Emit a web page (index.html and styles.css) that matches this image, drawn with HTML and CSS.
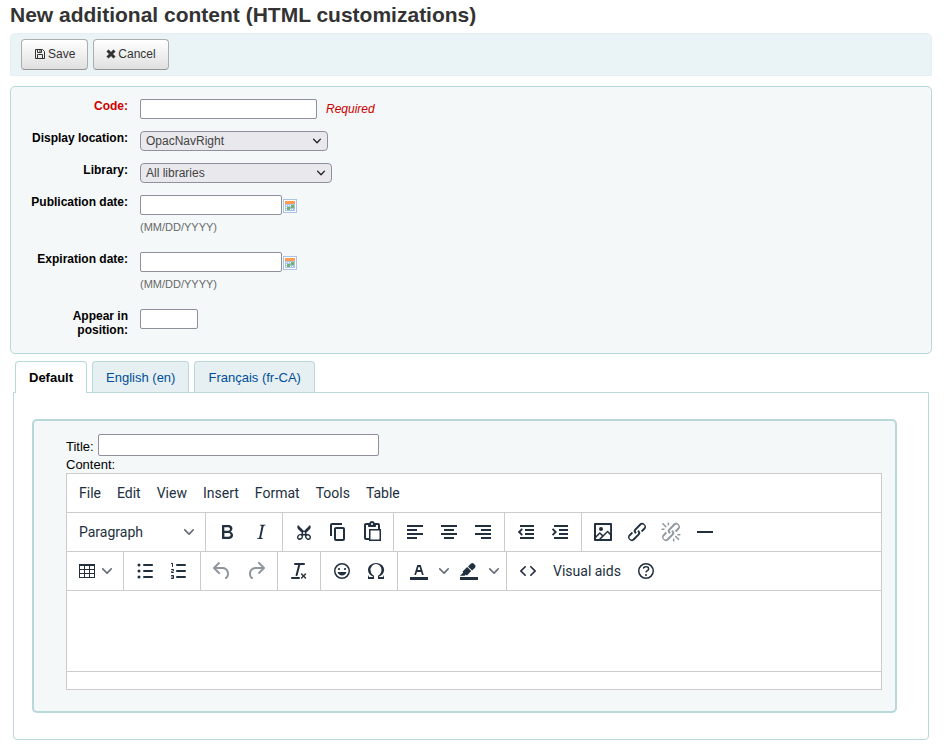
FILE: index.html
```html
<!DOCTYPE html>
<html lang="en">
<head>
<meta charset="utf-8">
<title>New additional content</title>
<link rel="stylesheet" href="styles.css">
</head>
<body>
<svg class="defs" aria-hidden="true">
  <symbol id="chev" viewBox="0 0 10 10"><path d="M8.7 2.2c.3-.3.8-.3 1 0 .4.4.4.9 0 1.2L5.7 7.8c-.3.3-.9.3-1.2 0L.2 3.4a.8.8 0 0 1 0-1.2c.3-.3.8-.3 1.1 0L5 6l3.7-3.8z"/></symbol>
  <symbol id="cal" viewBox="0 0 14 14"><path fill="#a9c4e8" d="M0 0h14v14H0z"/><path fill="#fff" d="M1 1h12v12H1z"/><path fill="#a9c4e8" d="M2 5h10v7H2z"/><path fill="#ff9b52" d="M2 2h10v3H2z"/><path fill="#fff" d="M3 6h1v1H3zm2 0h1v1H5zm2 0h1v1H7zm2 0h1v1H9zM3 8h1v1H3zm2 0h1v1H5zM3 10h1v1H3zm4 0h1v1H7zm2 0h1v1H9z"/><path fill="#6cb56c" d="M8 6h3v3H8zM4 8h3v3H4z"/></symbol>
</svg>
<main>
<form>
<h1>New additional content (HTML customizations)</h1>
<div class="toolbar">
  <button class="btn" type="button"><svg width="12" height="12" viewBox="0 0 12 12" fill="none" stroke="#333"><path d="M1.500 1.500h7l2 2v7h-9zM3.500 10.500v-4h5v4M3.500 1.500v3h4v-3M6 2v2"/></svg>Save</button>
  <button class="btn" type="button"><svg width="10" height="12" viewBox="0 0 10 12" fill="none" stroke="#333" stroke-width="3"><path d="m1.500 2.500 7 7m0-7-7 7"/></svg>Cancel</button>
</div>
<fieldset class="details">
  <div class="row"><label class="required" for="code">Code:</label><div class="field"><input id="code" class="w-code" type="text"><span class="note">Required</span></div></div>
  <div class="row"><label for="location">Display location:</label><div class="field"><span class="select w-location"><select id="location"><option>OpacNavRight</option></select><svg><use href="#chev"/></svg></span></div></div>
  <div class="row"><label for="library">Library:</label><div class="field"><span class="select w-library"><select id="library"><option>All libraries</option></select><svg><use href="#chev"/></svg></span></div></div>
  <div class="row date"><label for="published">Publication date:</label><div class="field"><input id="published" class="w-date" type="text"><svg class="cal"><use href="#cal"/></svg><div class="hint">(MM/DD/YYYY)</div></div></div>
  <div class="row date"><label for="expires">Expiration date:</label><div class="field"><input id="expires" class="w-date" type="text"><svg class="cal"><use href="#cal"/></svg><div class="hint">(MM/DD/YYYY)</div></div></div>
  <div class="row"><label for="position">Appear in position:</label><div class="field"><input id="position" class="w-position" type="text"></div></div>
</fieldset>
<nav class="tabs"><a class="active" href="#default">Default</a><a href="#en">English (en)</a><a href="#fr">Français (fr-CA)</a></nav>
<section class="panel" id="default">
<fieldset class="content">
  <div class="title-row"><label for="title">Title:</label><input id="title" type="text"></div>
  <label class="content-label" for="body">Content:</label>
  <div class="editor">
    <div class="bar menus"><button type="button">File</button><button type="button">Edit</button><button type="button">View</button><button type="button">Insert</button><button type="button">Format</button><button type="button">Tools</button><button type="button">Table</button></div>
    <div class="bar">
      <div class="group"><button class="block" type="button">Paragraph<svg class="chev"><use href="#chev"/></svg></button></div>
      <div class="group">
        <button type="button" aria-label="Bold"><svg viewBox="0 0 24 24"><path fill-rule="evenodd" d="M7.800 19c-.3 0-.5 0-.6-.2l-.2-.5V5.700c0-.2 0-.4.2-.5l.6-.2h5c1.500 0 2.700.3 3.500 1 .7.6 1.100 1.400 1.100 2.500a3 3 0 0 1-.6 1.900c-.4.6-1 1-1.600 1.200.4.1.9.3 1.300.6s.8.7 1 1.200c.4.4.5 1 .5 1.600 0 1.300-.4 2.300-1.300 3-.8.7-2.100 1-3.800 1H7.800Zm5-8.300c.6 0 1.200-.1 1.600-.5.4-.3.6-.7.6-1.300 0-1.100-.8-1.700-2.300-1.700H9.300v3.500h3.400Zm.5 6c.7 0 1.300-.1 1.700-.4.4-.4.6-.9.6-1.500s-.2-1-.7-1.400c-.4-.3-1-.4-2-.4H9.400v3.800h4Z"/></svg></button>
        <button type="button" aria-label="Italic"><svg viewBox="0 0 24 24"><path d="m16.700 4.700-.1.9h-.3c-.6 0-1 0-1.400.3-.3.3-.4.6-.5 1.100l-2.100 9.800v.6c0 .5.4.8 1.400.8h.2l-.2.800H8l.2-.8h.2c1.100 0 1.800-.5 2-1.500l2-9.800.1-.5c0-.6-.4-.8-1.400-.8h-.3l.2-.9h5.700z"/></svg></button>
      </div>
      <div class="group">
        <button type="button" aria-label="Cut"><svg viewBox="0 0 24 24"><path fill-rule="evenodd" d="M18 15c.6.7 1 1.400 1 2.300 0 .8-.2 1.500-.7 2l-.8.5-1 .2c-.4 0-.8 0-1.200-.3a3.900 3.900 0 0 1-2.100-2.200c-.2-.5-.3-1-.2-1.500l-1-1-1 1c0 .5 0 1-.2 1.500-.1.5-.4 1-.9 1.400-.3.4-.7.6-1.200.8l-1.200.3c-.4 0-.7 0-1-.2-.3 0-.6-.3-.8-.5-.5-.5-.8-1.200-.7-2 0-.9.400-1.600 1-2.200A3.700 3.700 0 0 1 8.600 14H9l1-1-4-4-.5-1a3.300 3.300 0 0 1 0-2c0-.4.3-.7.5-1l6 6 6-6 .5 1a3.300 3.300 0 0 1 0 2c0 .4-.3.7-.5 1l-4 4 1 1h.5c.4 0 .8 0 1.200.3.500.2.9.4 1.300.7ZM9.500 17.200l.1-.7a1 1 0 0 0-.6-1.100c-.9-.2-2.100.3-2.500 1.400-.4 1.100.1 1.600 1 1.500.9-.1 1.700-.5 2-1.100Zm2.500-3.100a1.100 1.100 0 1 0 0-2.200 1.100 1.100 0 0 0 0 2.200Zm5.400 4c.5-.5.1-1.700-.8-2.300-1-.6-2.100-.4-2.200.7-.1 1 .8 1.800 1.900 1.900.5.1.9 0 1.100-.3Z"/></svg></button>
        <button type="button" aria-label="Copy"><svg viewBox="0 0 24 24"><path d="M16 3H6a2 2 0 0 0-2 2v11h2V5h10V3Zm1 4a2 2 0 0 1 2 2v10a2 2 0 0 1-2 2h-7a2 2 0 0 1-2-2V9c0-1.200.9-2 2-2h7Zm0 12V9h-7v10h7Z"/></svg></button>
        <button type="button" aria-label="Paste"><svg viewBox="0 0 24 24"><path fill-rule="evenodd" d="M18 9V5h-2v1c0 .6-.4 1-1 1H9a1 1 0 0 1-1-1V5H6v13h3V9h9ZM9 20H6a2 2 0 0 1-2-2V5c0-1.100.9-2 2-2h3.200A3 3 0 0 1 12 1a3 3 0 0 1 2.800 2H18a2 2 0 0 1 2 2v4h1v12H9v-1Zm1.500-9.500v9h9v-9h-9ZM12 3a1 1 0 1 0 0 2 1 1 0 0 0 0-2Z"/></svg></button>
      </div>
      <div class="group">
        <button type="button" aria-label="Align left"><svg viewBox="0 0 24 24"><path d="M4 5h16v2H4zM4 9h10v2H4zM4 13h16v2H4zM4 17h10v2H4z"/></svg></button>
        <button type="button" aria-label="Align center"><svg viewBox="0 0 24 24"><path d="M4 5h16v2H4zM7 9h10v2H7zM4 13h16v2H4zM7 17h10v2H7z"/></svg></button>
        <button type="button" aria-label="Align right"><svg viewBox="0 0 24 24"><path d="M4 5h16v2H4zM10 9h10v2H10zM4 13h16v2H4zM10 17h10v2H10z"/></svg></button>
      </div>
      <div class="group">
        <button type="button" aria-label="Decrease indent"><svg viewBox="0 0 24 24"><path d="M6 5h14v2H6zM11 9h9v2h-9zM11 13h9v2h-9zM6 17h14v2H6zM7.600 8.200 8.900 9.500 6.500 12l2.400 2.500-1.300 1.300L3.800 12z"/></svg></button>
        <button type="button" aria-label="Increase indent"><svg viewBox="0 0 24 24"><path d="M6 5h14v2H6zM11 9h9v2h-9zM11 13h9v2h-9zM6 17h14v2H6zM5.200 8.200 3.900 9.500 6.300 12l-2.400 2.500 1.300 1.300L9 12z"/></svg></button>
      </div>
      <div class="group last">
        <button type="button" aria-label="Image"><svg viewBox="0 0 24 24"><path fill-rule="evenodd" d="m5 15.700 3.300-3.200c.3-.3.7-.3 1 0L12 15l4.100-4c.3-.4.8-.4 1 0l2 1.900V5H5v10.700ZM5 18v1h3l2.800-2.900-2-2L5 17.900Zm14-3-2.500-2.400-6.400 6.500H19v-4ZM4 3h16c.6 0 1 .4 1 1v16c0 .6-.4 1-1 1H4a1 1 0 0 1-1-1V4c0-.6.4-1 1-1Zm6 8a2 2 0 1 0 0-4 2 2 0 0 0 0 4Z"/></svg></button>
        <button type="button" aria-label="Link"><svg viewBox="0 0 24 24"><path id="link" d="M6.200 12.300a1 1 0 0 1 1.400 1.400l-2 2a2 2 0 1 0 2.600 2.800l4.800-4.800a1 1 0 0 0 0-1.400 1 1 0 1 1 1.400-1.300 2.900 2.900 0 0 1 0 4L9.600 20a3.900 3.900 0 0 1-5.500-5.500l2-2Zm11.600-.6a1 1 0 0 1-1.400-1.400l2-2a2 2 0 1 0-2.600-2.800L11 10.300a1 1 0 0 0 0 1.400A1 1 0 1 1 9.600 13a2.900 2.900 0 0 1 0-4L14.400 4a3.900 3.900 0 0 1 5.500 5.500l-2 2Z"/></svg></button>
        <button type="button" aria-label="Remove link" disabled><svg viewBox="0 0 24 24"><use href="#link"/><path d="M7.600 6.300a.8.8 0 0 1-1 1.100L3.300 4.200a.7.7 0 1 1 1-1l3.200 3.100ZM5.100 8.600a.8.8 0 0 1 0 1.500H3a.8.8 0 0 1 0-1.500H5Zm5-3.500a.8.8 0 0 1-1.500 0V3a.8.8 0 0 1 1.500 0V5Zm6 11.800a.8.8 0 0 1 1-1l3.200 3.200a.8.8 0 0 1-1 1L16 17Zm-2.200 2a.8.8 0 0 1 1.500 0V21a.8.8 0 0 1-1.500 0V19Zm5-3.500a.7.7 0 1 1 0-1.500H21a.8.8 0 0 1 0 1.500H19Z"/></svg></button>
        <button type="button" aria-label="Horizontal line"><svg viewBox="0 0 24 24"><path d="M4 11h16v2H4z"/></svg></button>
      </div>
    </div>
    <div class="bar">
      <div class="group"><button class="menu-btn" type="button" aria-label="Table"><svg viewBox="0 0 24 24"><path fill-rule="evenodd" d="M4 5h16v14H4zM5 7v3h4V7zm5 0v3h4V7zm5 0v3h4V7zM5 11v3h4v-3zm5 0v3h4v-3zm5 0v3h4v-3zM5 15v3h4v-3zm5 0v3h4v-3zm5 0v3h4v-3z"/></svg><svg class="chev"><use href="#chev"/></svg></button></div>
      <div class="group">
        <button type="button" aria-label="Bullet list"><svg viewBox="0 0 24 24"><path d="M11 5h8c.6 0 1 .4 1 1s-.4 1-1 1h-8a1 1 0 0 1 0-2Zm0 6h8a1 1 0 0 1 0 2h-8a1 1 0 0 1 0-2Zm0 6h8a1 1 0 0 1 0 2h-8a1 1 0 0 1 0-2Z"/><circle cx="6" cy="6" r="1.500"/><circle cx="6" cy="12" r="1.500"/><circle cx="6" cy="18" r="1.500"/></svg></button>
        <button type="button" aria-label="Numbered list"><svg viewBox="0 0 24 24"><path d="M10 17h8a1 1 0 0 1 0 2h-8a1 1 0 0 1 0-2Zm0-6h8a1 1 0 0 1 0 2h-8a1 1 0 0 1 0-2Zm0-6h8a1 1 0 0 1 0 2h-8a1 1 0 1 1 0-2ZM6 4v3.500c0 .3-.2.5-.5.5a.5.5 0 0 1-.5-.5V5h-.5a.5.5 0 0 1 0-1H6Zm-1 8.800.2.200h1.300c.3 0 .5.2.5.5s-.2.5-.5.5H4.900a1 1 0 0 1-.9-1V13c0-.4.3-.8.6-1l1.200-.4.2-.3a.2.2 0 0 0-.2-.2H4.500a.5.5 0 0 1-.5-.5c0-.3.2-.5.5-.5h1.600c.5 0 .9.4.9 1v.1c0 .4-.3.8-.6 1l-1.200.4-.2.300ZM7 17v2c0 .6-.4 1-1 1H4.500a.5.5 0 0 1 0-1h1.200c.2 0 .3-.1.3-.3 0-.2-.1-.3-.3-.3H4.400a.4.4 0 1 1 0-.8h1.300c.2 0 .3-.1.3-.3 0-.2-.1-.3-.3-.3H4.500a.5.5 0 1 1 0-1H6c.6 0 1 .4 1 1Z"/></svg></button>
      </div>
      <div class="group">
        <button type="button" aria-label="Undo" disabled><svg viewBox="0 0 24 24"><path d="M6.400 8H12c3.700 0 6.200 2 6.800 5.100.6 2.700-.4 5.600-2.300 6.800a1 1 0 0 1-1-1.800c1.100-.6 1.800-2.700 1.400-4.600-.5-2.100-2.100-3.500-4.900-3.500H6.400l3.300 3.300a1 1 0 1 1-1.400 1.400l-5-5a1 1 0 0 1 0-1.400l5-5a1 1 0 0 1 1.400 1.400L6.400 8Z"/></svg></button>
        <button type="button" aria-label="Redo" disabled><svg viewBox="0 0 24 24"><path d="M17.600 10H12c-2.800 0-4.400 1.400-4.900 3.500-.4 2 .3 4 1.400 4.600a1 1 0 1 1-1 1.800c-2-1.200-2.900-4.100-2.300-6.800.6-3 3-5.100 6.800-5.100h5.600l-3.300-3.300a1 1 0 1 1 1.400-1.400l5 5a1 1 0 0 1 0 1.400l-5 5a1 1 0 0 1-1.400-1.400l3.300-3.300Z"/></svg></button>
      </div>
      <div class="group">
        <button type="button" aria-label="Clear formatting"><svg viewBox="0 0 24 24"><path d="M13.200 6a1 1 0 0 1 0 .2l-2.600 10a1 1 0 0 1-1 .8h-.2a.8.8 0 0 1-.8-1l2.600-10H8a1 1 0 1 1 0-2h9a1 1 0 0 1 0 2h-3.800ZM5 18h7a1 1 0 0 1 0 2H5a1 1 0 0 1 0-2Zm13 1.500L16.500 18 15 19.500a.7.7 0 0 1-1-1l1.500-1.500-1.500-1.500a.7.7 0 0 1 1-1l1.500 1.500 1.500-1.500a.7.7 0 0 1 1 1L17.500 17l1.500 1.500a.7.7 0 0 1-1 1Z"/></svg></button>
      </div>
      <div class="group">
        <button type="button" aria-label="Emoticons"><svg viewBox="0 0 24 24"><path d="M9 11c.6 0 1-.4 1-1s-.4-1-1-1a1 1 0 0 0-1 1c0 .6.4 1 1 1Zm6 0c.6 0 1-.4 1-1s-.4-1-1-1a1 1 0 0 0-1 1c0 .6.4 1 1 1Zm-3 5.500c2.100 0 4-1.500 4.400-3.500H7.600c.5 2 2.300 3.500 4.400 3.500ZM12 4a8 8 0 1 0 0 16 8 8 0 0 0 0-16Zm0 14.500a6.500 6.500 0 1 1 0-13 6.500 6.500 0 0 1 0 13Z" fill-rule="evenodd"/></svg></button>
        <button type="button" aria-label="Special character"><svg viewBox="0 0 24 24"><path d="M15 18h4l1-2v4h-6v-3.300l1.400-1a6 6 0 0 0 1.800-2.900 6.300 6.300 0 0 0-.1-4.100 5.800 5.800 0 0 0-3-3.200c-.6-.3-1.300-.5-2.100-.5a5.100 5.100 0 0 0-3.900 1.800 6.300 6.300 0 0 0-1.300 6 6.200 6.200 0 0 0 1.800 3l1.400.9V20H4v-4l1 2h4v-.5l-2-1L5.400 15A6.500 6.500 0 0 1 4 11c0-1 .2-1.900.6-2.700A7 7 0 0 1 6.300 6C7.100 5.400 8 5 9 4.500c1-.3 2-.5 3.100-.5a8.800 8.800 0 0 1 5.700 2 7 7 0 0 1 1.700 2.300 6 6 0 0 1 .2 4.800c-.2.7-.6 1.300-1 1.900a7.600 7.600 0 0 1-3.600 2.500v.5Z"/></svg></button>
      </div>
      <div class="group">
        <button class="split" type="button" aria-label="Text color"><svg viewBox="0 0 24 24"><path d="M3 18h18v3H3z"/><path fill-rule="evenodd" d="M8.700 16h-.8a.5.5 0 0 1-.5-.6l2.700-9c.1-.3.3-.4.5-.4h2.800c.2 0 .4.1.5.4l2.700 9a.5.5 0 0 1-.5.6h-.8a.5.5 0 0 1-.4-.4l-.7-2.200c0-.3-.3-.4-.5-.4h-3.400c-.2 0-.4.1-.5.4l-.7 2.200c0 .3-.2.4-.4.4Zm2.600-7.600-.6 2a.5.5 0 0 0 .5.6h1.600a.5.5 0 0 0 .5-.6l-.6-2c0-.3-.3-.4-.5-.4h-.4c-.2 0-.4.1-.5.4Z"/></svg><svg class="chev"><use href="#chev"/></svg></button>
        <button class="split" type="button" aria-label="Background color"><svg viewBox="0 0 24 24"><path d="M3 18h18v3H3zM7.700 16.700H3l3.300-3.300-.7-.8L10.200 8l4 4.100-4 4.200c-.2.2-.6.2-.8 0l-.6-.7-1.100 1.100Zm5-7.500L11 7.400l3-2.900a2 2 0 0 1 2.600 0L18 6c.7.7.7 2 0 2.700l-2.900 2.900-1.800-1.800-.6-.6Z"/></svg><svg class="chev"><use href="#chev"/></svg></button>
      </div>
      <div class="group last">
        <button type="button" aria-label="Source code"><svg viewBox="0 0 24 24"><path d="M9.800 15.700c.3.3.3.8 0 1-.3.4-.9.4-1.200 0l-4.400-4.100a.8.8 0 0 1 0-1.200l4.400-4.200c.3-.3.9-.3 1.200 0 .3.3.3.8 0 1.100L6 12l3.800 3.700ZM14.200 15.700c-.3.3-.3.8 0 1 .4.4.9.4 1.200 0l4.400-4.100c.3-.3.3-.9 0-1.200l-4.400-4.200a.8.8 0 0 0-1.200 0c-.3.3-.3.8 0 1.100L18 12l-3.800 3.700Z"/></svg></button>
        <button class="text" type="button">Visual aids</button>
        <button type="button" aria-label="Help"><svg viewBox="0 0 24 24"><path fill-rule="evenodd" d="M12 4a8 8 0 1 0 0 16 8 8 0 0 0 0-16Zm0 14.500a6.500 6.500 0 1 1 0-13 6.500 6.500 0 0 1 0 13Z"/><path d="M9.600 9.700a.7.7 0 0 1-.7-.8c0-1.100 1.500-1.800 3.200-1.800 1.800 0 3.200.8 3.200 2.400 0 1.400-.4 2.100-1.500 2.800-.2 0-.3.1-.3.2a2 2 0 0 0-.8.800.8.8 0 0 1-1.400-.6c.3-.7.8-1 1.300-1.500l.4-.2c.7-.4.8-.6.8-1.500 0-.5-.6-.9-1.700-.9-.5 0-1 .1-1.400.3-.2 0-.3.1-.3.200 0 .2-.4.600-.8.600Z"/><circle cx="12" cy="16" r="1"/></svg></button>
      </div>
    </div>
    <textarea id="body"></textarea>
    <div class="status"></div>
  </div>
</fieldset>
</section>
</form>
</main>
</body>
</html>
```

FILE: styles.css
```css
* { box-sizing: border-box; }
body { margin: 0; background: #fff; color: #000; font: 13px "Liberation Sans", Arial, sans-serif; }
.defs { display: none; }
main { padding: 3px 12px 10px 10px; }
fieldset { margin: 0; min-width: 0; background: #f4f8f9; }
h1 { margin: 0 0 6px; color: #333; font-size: 21px; line-height: 24px; }
button { font: inherit; }
input { height: 20px; padding: 1px 4px; border: 1px solid #8f8f9d; border-radius: 2px; background: #fff; font: inherit; }

.toolbar { display: flex; gap: 5px; padding: 5px 10px; border: 1px solid #e6f0f2; border-radius: 5px 5px 0 0; background: #eaf3f5; }
.btn { display: flex; align-items: center; gap: 2px; height: 31px; padding: 0 12px 2px; border: 1px solid #adadad; border-bottom-color: #949494; border-radius: 4px; background: linear-gradient(#fff, #e0e0e0); color: #333; font-size: 12px; }

.details { display: flex; flex-direction: column; gap: 12px; margin-top: 10px; padding: 12px 10px 24px 0; border: 1px solid #b9d8d9; border-radius: 5px; }
.row { display: grid; grid-template-columns: 117px 1fr; column-gap: 12px; }
.row > label { height: 20px; padding-left: 20px; font-size: 12px; font-weight: bold; line-height: 14px; text-align: right; }
.row > .required { color: #c00; }
.field { display: flex; flex-wrap: wrap; align-items: center; align-content: flex-start; row-gap: 6px; font-size: 12px; }
.date { height: 45px; }
.w-code { width: 177px; }
.w-location { width: 188px; }
.w-library { width: 192px; }
.w-date { width: 142px; }
.w-position { width: 58px; }
.note { margin-left: 9px; color: #c00; font-style: italic; }
.cal { width: 14px; height: 14px; margin: 2px 0 0 1px; }
.hint { width: 100%; color: #696969; font-size: 11px; }
.select { display: grid; align-items: center; }
.select > * { grid-area: 1 / 1; }
.select select { width: 100%; height: 20px; padding: 0 5px; border: 1px solid #8f8f9d; border-radius: 4px; background: #e9e9ed; color: #444; font: inherit; appearance: none; }
.select svg { width: 8px; height: 8px; margin-right: 7px; justify-self: end; fill: #222; pointer-events: none; }

.tabs { display: flex; gap: 5px; margin: 7px 0 0 5px; }
.tabs a { height: 31px; padding: 0 13px; border: 1px solid #b9d8d9; border-bottom: 0; border-radius: 4px 4px 0 0; background: #e6f0f2; color: #004d99; line-height: 32px; text-decoration: none; }
.tabs .active { height: 32px; margin-bottom: -1px; background: #fff; color: #000; font-weight: bold; z-index: 1; }
.panel { margin: 0 3px; padding: 26px 31px 26px 18px; border: 1px solid #b9d8d9; border-radius: 0 0 4px 4px; }
.content { padding: 13px 13px 21px 32px; border: 2px solid #b9d8d9; border-radius: 5px; }
.title-row { display: flex; align-items: center; gap: 4px; }
.title-row label { padding-top: 2px; }
.title-row input { width: 281px; height: 22px; }
.content-label { display: block; line-height: 17px; }

.editor { border: 1px solid #ccc; background: #fff; color: #222f3e; font: 14px Roboto, sans-serif; }
.bar { display: flex; height: 39px; border-bottom: 1px solid #ccc; }
.menus { padding: 0 4px; }
.group { display: flex; padding: 0 4px; border-right: 1px solid #ccc; }
.group.last { border-right: 0; }
.bar button { display: flex; align-items: center; justify-content: center; width: 34px; height: 34px; margin-top: 2px; padding: 0; border: 0; background: none; color: #222f3e; }
.bar button:disabled { opacity: .5; }
.bar svg { flex: none; width: 24px; height: 24px; fill: #222f3e; }
.bar .chev { width: 10px; height: 10px; opacity: .7; }
.menus button, .bar .text { width: auto; padding: 0 8px; }
.bar .block { justify-content: space-between; width: 130px; padding: 0 7px 0 8px; }
.bar .menu-btn { gap: 3px; width: 48px; padding-right: 4px; }
.bar .split { gap: 8px; width: 50px; padding-left: 2px; }
textarea { display: block; width: 100%; height: 81px; padding: 8px; border: 0; border-bottom: 1px solid #ccc; resize: none; font: inherit; }
.status { height: 17px; }
```
